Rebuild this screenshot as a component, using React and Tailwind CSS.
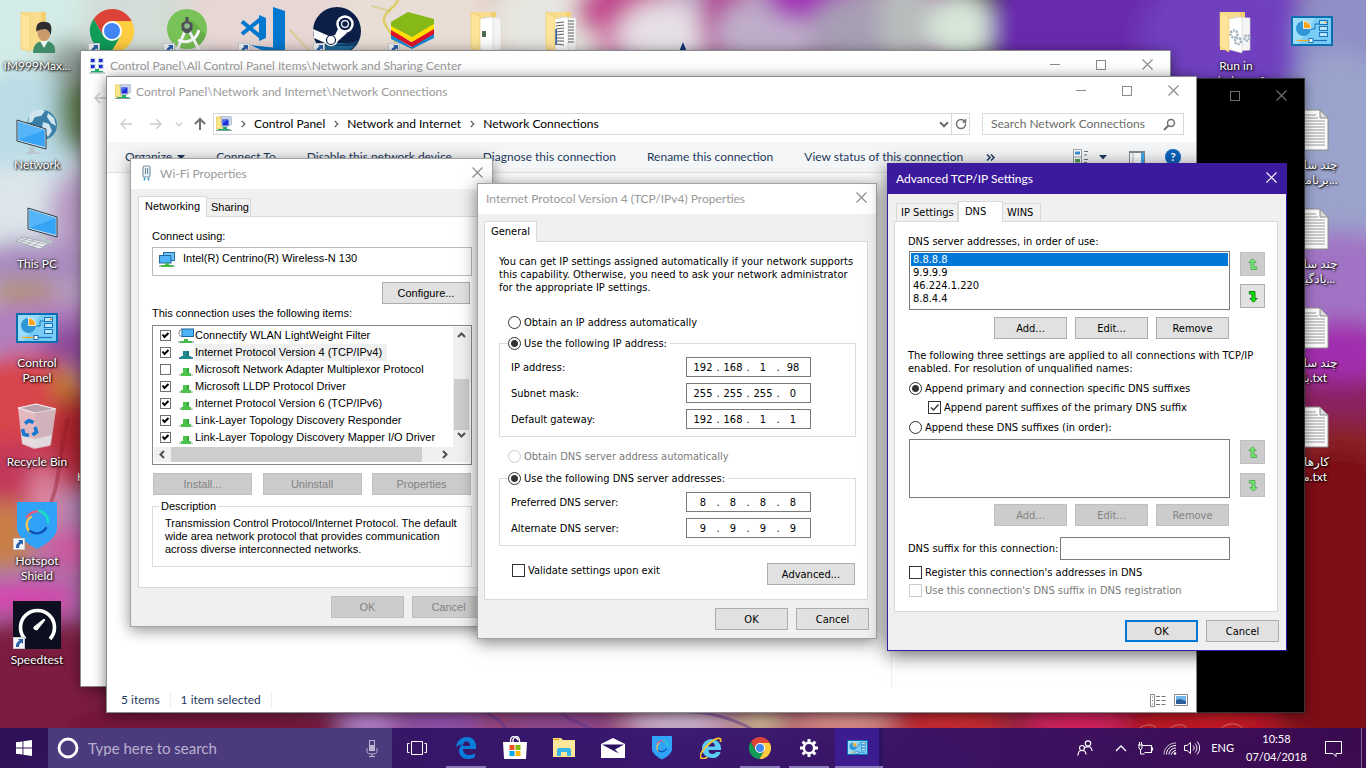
import React from "react";
import { RotateCw } from "lucide-react";

/* ---------- wallpaper ---------- */

const blobs = [
  [20, 20, 110, 70, "#d3ebe6"],
  [20, 130, 60, 60, "#b9dce6"],
  [78, 108, 22, 46, "#5f7a4c"],
  [72, 62, 26, 22, "#8d9a94"],
  [170, 20, 90, 50, "#d3dcd6"],
  [300, 20, 120, 60, "#e6d6d4"],
  [430, 25, 100, 55, "#e9ded6"],
  [500, 10, 14, 50, "#dfb0ae"],
  [550, 20, 60, 55, "#e6e6e0"],
  [625, 10, 50, 34, "#c2488f"],
  [610, 44, 14, 24, "#d386b0"],
  [665, 34, 46, 34, "#e6dfe6"],
  [725, 20, 26, 50, "#b24a98"],
  [765, 34, 50, 36, "#bfaeca"],
  [810, -4, 46, 26, "#a32fb6"],
  [860, 30, 50, 36, "#a79fb4"],
  [1000, 20, 60, 80, "#450b38"],
  [905, 20, 26, 46, "#b8bcbc"],
  [960, 28, 34, 34, "#d6e6d8"],
  [1100, 30, 110, 80, "#6a2cae"],
  [1230, 40, 90, 70, "#7040c0"],
  [1355, 40, 60, 80, "#8f90c6"],
  [1340, 160, 70, 110, "#9aa3cc"],
  [1340, 290, 70, 60, "#a173c4"],
  [1340, 352, 60, 32, "#a12fae"],
  [1340, 405, 60, 24, "#8a2460"],
  [1340, 440, 60, 20, "#8a2028"],
  [1340, 600, 90, 150, "#7d0a12"],
  [20, 210, 60, 45, "#dce6ea"],
  [72, 215, 24, 40, "#b79ac4"],
  [30, 266, 60, 26, "#a98bbf"],
  [24, 292, 34, 10, "#b7983f"],
  [40, 330, 70, 32, "#b07fc0"],
  [70, 352, 30, 30, "#8e4c9c"],
  [24, 410, 70, 56, "#d8454c"],
  [66, 388, 10, 24, "#b2911f"],
  [76, 440, 24, 50, "#a4202c"],
  [20, 475, 50, 34, "#c2395a"],
  [44, 500, 14, 34, "#e08aa5"],
  [4, 535, 30, 34, "#c97f45"],
  [70, 550, 30, 22, "#cc5aa0"],
  [20, 598, 60, 14, "#dc3fae"],
  [40, 690, 130, 70, "#7c1b3f"],
  [210, 730, 150, 30, "#74193a"],
  [370, 722, 30, 14, "#b58ad8"],
  [440, 722, 50, 14, "#8c52b4"],
  [560, 722, 60, 14, "#8a4a94"],
  [680, 722, 60, 14, "#d9cfe6"],
  [760, 722, 30, 14, "#d8cfa0"],
  [845, 722, 60, 14, "#e6a296"],
  [950, 722, 60, 14, "#d62a2a"],
  [1080, 722, 60, 14, "#e22368"],
  [1200, 722, 80, 18, "#c51824"],
];

function Wallpaper() {
  return (
    <svg className="absolute inset-0 h-full w-full" viewBox="0 0 1366 768" preserveAspectRatio="none" aria-hidden="true">
      <defs>
        <filter id="soft" x="-10%" y="-10%" width="120%" height="120%">
          <feGaussianBlur stdDeviation="11" />
        </filter>
        <linearGradient id="base" x1="0" y1="0" x2="1" y2="1">
          <stop offset="0" stopColor="#d5e6e4" />
          <stop offset="0.5" stopColor="#9a5a9a" />
          <stop offset="1" stopColor="#8d0c16" />
        </linearGradient>
      </defs>
      <rect width="1366" height="768" fill="url(#base)" />
      <g filter="url(#soft)">
        {blobs.map(([x, y, rx, ry, c], i) => (
          <ellipse key={i} cx={x} cy={y} rx={rx} ry={ry} fill={c} />
        ))}
      </g>
      <g fill="none" strokeLinecap="round">
        <path d="M398 0c-3 8-12 10-14 18s10 14 14 32" stroke="#d8c83a" strokeWidth="2.500" opacity="0.7" />
        <path d="M290 30l22 24M372 6l18 5" stroke="#d4c060" strokeWidth="2" opacity="0.5" />
        <path d="M68 420c-10 30-6 60-20 90" stroke="#8d1c2b" strokeWidth="4" opacity="0.4" />
        <path d="M480 711c12 4 20 8 26 18M560 711c6 8 16 10 30 17M690 712c20 0 40 6 60 16" stroke="#5d3391" strokeWidth="3" opacity="0.5" />
      </g>
      <g fill="none" stroke="#e9b9c9" strokeWidth="0.900" opacity="0.55">
        <path d="M1130 740c6-14 18-17 24-14s-2 12-10 18-14 16-22 16M1165 735c4-10 16-12 20-9s-6 16-16 20M1218 732c6-10 20-10 24-4" />
      </g>
    </svg>
  );
}

/* ---------- icons ---------- */

function Svg({ size, w, h, box, children, className }) {
  return (
    <svg width={w || size} height={h || size} viewBox={box} className={"block shrink-0 " + (className || "")} aria-hidden="true">
      {children}
    </svg>
  );
}

function FolderBack() {
  return (
    <>
      <path d="M8 5h25v38H8z" fill="#f3cf6f" />
      <path d="M8 5h20v38H8z" fill="#f8dc8c" />
    </>
  );
}
const folderFlap = <path d="M8 5l9 5v35l-9-5z" fill="#fde49a" stroke="#eec966" strokeWidth="0.600" />;

const UserFolder = ({ size = 48 }) => (
  <Svg size={size} box="0 0 48 48">
    <FolderBack />
    {folderFlap}
    <path d="M20 46c0-8 4-12 11-12s12 3 11 12z" fill="#3f8c6b" />
    <path d="M27 34l4 7 4-7z" fill="#f1f5f1" />
    <ellipse cx="31" cy="26" rx="6.500" ry="8" fill="#c89a6c" />
    <path d="M23.500 25c-1.500-9 4-11 9-10 6 0 7 6 5 13-1-4-3-6-6-6-3 1-6 0-8 3z" fill="#2c2c2e" />
  </Svg>
);

function Monitor({ x = 0, y = 0 }) {
  return (
    <g transform={`translate(${x} ${y})`}>
      <path d="M0 0l29 9v20L0 21z" fill="#d9e3ea" stroke="#2a3a48" strokeWidth="1" />
      <path d="M1.200 1.700l26.600 8.300v17L1.200 20z" fill="#35a4f4" />
      <path d="M1.200 1.700l26.600 8.300L1.200 20z" fill="#6cc2fb" opacity="0.6" />
      <path d="M12 26l6 2v4l6 1c1 2-4 4-9 3s-7-3-4-4l2-1z" fill="#bcc6cd" />
    </g>
  );
}

const NetworkIcon = ({ size = 48 }) => (
  <Svg size={size} box="0 0 48 48">
    <circle cx="29" cy="19" r="15" fill="#3a7fa8" />
    <path d="M17 8c6-6 12-5 15-3l-4 5-6 1-3 5-4 1zM35 7l6 5 2 8-5-3-4-6zM30 16l6 2 3 7-4 6-6-8z" fill="#cfe6ee" />
    <Monitor x={4} y={14} />
  </Svg>
);

const PcIcon = ({ size = 48 }) => (
  <Svg size={size} box="0 0 48 48">
    <Monitor x={15} y={3} />
    <path d="M10 32l26 6-9 6L3 36z" fill="#eef1f4" stroke="#98a2ab" strokeWidth="0.800" />
    <path d="M8 33.500l26 6M6 35l24 7M15 33l-8 5M21 35l-8 5M27 37l-8 5" stroke="#98a2ab" strokeWidth="0.800" />
  </Svg>
);

const ControlIcon = ({ w = 42, h = 30 }) => (
  <Svg w={w} h={h} box="0 0 42 30">
    <rect width="42" height="30" fill="#0c6fb0" />
    <rect x="2" y="2" width="38" height="26" fill="#79cdf7" />
    <path d="M2 2h22L8 28H2z" fill="#9adcfa" />
    <circle cx="12.500" cy="12.500" r="7.500" fill="#3196d6" />
    <path d="M12.500 12.500V5a7.500 7.500 0 0 1 7.500 7.500z" fill="#f9a51a" stroke="#fff" strokeWidth="0.800" />
    <path d="M20 13h4V8h5" fill="none" stroke="#1873b8" />
    <g fill="#b9e6fb" stroke="#1873b8">
      <rect x="28.500" y="4.500" width="8" height="4" />
      <rect x="28.500" y="10.500" width="8" height="4" />
      <rect x="28.500" y="16.500" width="8" height="4" />
    </g>
    <path d="M34 6.500h2" stroke="#f37c1a" />
    <path d="M6 24.500h12" stroke="#f9a51a" strokeWidth="1.200" />
    <path d="M20 24.500h16" stroke="#1873b8" strokeWidth="1.200" />
    <rect x="18" y="22.500" width="4" height="4" fill="#fff" stroke="#1873b8" />
  </Svg>
);

const RecycleIcon = ({ size = 48 }) => (
  <Svg size={size} box="0 0 48 48">
    <path d="M5 5l18-4 20 5-6 37-16 3-12-5z" fill="#e8dfe4" opacity="0.75" />
    <path d="M5 5l17 5 21-4-20-5z" fill="#b9a2ac" stroke="#f5f2f4" strokeWidth="1.200" />
    <path d="M22 10l21-4-5 36-16 3z" fill="#cdb2bc" opacity="0.8" />
    <path d="M8 32l14 4 17-4-2 10-15 3-12-4z" fill="#e8ebec" opacity="0.7" />
    <g fill="none" stroke="#1878d0" strokeWidth="3.600">
      <path d="M12 20.500l4-3 4.500 2M22 24l1.500 5-4 3M16 32.500l-5-1-1.500-5.500" />
    </g>
  </Svg>
);

const Shield = ({ size = 48 }) => (
  <Svg size={size} box="0 0 48 48">
    <path d="M4 0h40v26c0 9-12 17-20 21C16 43 4 35 4 26z" fill="#30a2f8" />
    <g fill="none" strokeWidth="2.400" strokeLinecap="round">
      <path d="M14 15c4-6 12-7 16-4" stroke="#e85a78" />
      <path d="M26 9c6 1 9 6 9 11" stroke="#12e3c4" />
      <path d="M17 30c-5-5-4-12 1-15" stroke="#f2c14f" />
      <path d="M33 26c-4 6-11 7-16 3" stroke="#0b55b0" />
    </g>
  </Svg>
);

const Speedtest = ({ size = 48 }) => (
  <Svg size={size} box="0 0 48 48">
    <rect width="48" height="48" fill="#0d0f20" />
    <path d="M12 38a17 17 0 1 1 25 0" fill="none" stroke="#fff" strokeWidth="3.600" />
    <path d="M21 26l10-8 1 1-8 10-3-1z" fill="#fff" stroke="#fff" />
  </Svg>
);

const Chrome = ({ size = 48 }) => (
  <Svg size={size} box="0 0 48 48">
    <path d="M24 14H43.600A22 22 0 0 0 5.550 12L15.340 29z" fill="#db4437" />
    <path d="M5.550 12A22 22 0 0 0 22.850 46L32.660 29H15.340z" fill="#0f9d58" />
    <path d="M22.850 46A22 22 0 0 0 43.600 14H24l8.660 15z" fill="#ffcd40" />
    <circle cx="24" cy="24" r="10" fill="#fff" />
    <circle cx="24" cy="24" r="8" fill="#4285f4" />
  </Svg>
);

const AndroidStudio = ({ size = 48 }) => (
  <Svg size={size} box="0 0 48 48">
    <circle cx="24" cy="22" r="20" fill="#78c257" />
    <path d="M28 12l15 16a20 20 0 0 1-10 12L24 28z" fill="#5da043" opacity="0.6" />
    <path d="M22 24l-9 22M26 24l13 24" stroke="#f0f0f0" strokeWidth="3" />
    <path d="M15 33c8 4 18 1 21-10" fill="none" stroke="#fafafa" strokeWidth="3" />
    <path d="M22.500 10h3v4l4 2.500v6L26 26h-4l-3.500-3.500v-6l4-2.500z" fill="#4d5054" />
    <circle cx="24" cy="19" r="2.800" fill="#8fb98a" />
  </Svg>
);

const VsCode = ({ size = 48 }) => (
  <Svg size={size} box="0 0 48 48">
    <path d="M35 0l12 4v44H35z" fill="#0078d0" />
    <path d="M12 38l23 2.500V48z" fill="#0078d0" />
    <path d="M21 8l7 3v20l-7 3z" fill="#0078d0" />
    <path d="M4 14.500L24 31M4 27L24 11" stroke="#0078d0" strokeWidth="4" />
  </Svg>
);

const Steam = ({ size = 48 }) => (
  <Svg size={size} box="0 0 48 48">
    <circle cx="24" cy="24" r="24" fill="#0c1f48" />
    <path d="M4 36a24 24 0 0 0 40 0z" fill="#1d6c9c" />
    <path d="M2 36c10 4 30 2 44-3l-3 6H6z" fill="#15406e" />
    <path d="M0 22l16 7 6-1 4-8 8 6-9 8c-2 6-9 7-13 2L1 31z" fill="#fff" />
    <circle cx="32" cy="17" r="7.500" fill="#0c1f48" stroke="#fff" strokeWidth="2.500" />
    <circle cx="32" cy="17" r="4" fill="#fff" />
    <circle cx="32" cy="17" r="2.800" fill="#0c1f48" />
    <circle cx="18" cy="33" r="4.500" fill="#fff" stroke="#0c1f48" strokeWidth="1.200" />
  </Svg>
);

const BlueStacks = ({ size = 48 }) => (
  <Svg size={size} box="0 0 48 48">
    <path d="M3 27l20 13 23-14v5L24 42 3 32z" fill="#1289d6" />
    <path d="M3 22l20 13 23-14v6L24 40 3 28z" fill="#e0122c" />
    <path d="M3 18l20 12 23-13v5L24 35 3 23z" fill="#ffe000" />
    <path d="M3 15L20 5l26 7v5L24 30 3 19z" fill="#86b817" />
  </Svg>
);

const DocFolder = ({ size = 48, kind }) => (
  <Svg size={size} box="0 0 48 48">
    <FolderBack />
    <path d="M22 10l16 1v32l-14 1z" fill="#f4f4f4" stroke="#d5d5d5" strokeWidth="0.600" />
    <path d="M15 12l15-2v36l-15-4z" fill="#fff" stroke="#cfcfcf" strokeWidth="0.600" />
    {kind === "pic" && <rect x="19" y="24" width="4" height="6" fill="#4e6a52" />}
    {kind === "text" && (
      <>
        <path d="M18 16l8-1M18 19l8-1M18 22l8-1M18 25l8-1M18 28l8-1M18 31l8 0M18 34l8 0M18 37l8 1M30 14h6M30 17h6M30 20h6M30 23h6M30 26h6M30 29h6M30 32h6M30 35h6" stroke="#4a4a4a" strokeWidth="0.900" />
        <path d="M16 22h3v16h-3z" fill="#3867ae" />
      </>
    )}
    {kind === "gear" && (
      <g fill="none" stroke="#9fb0bd" strokeWidth="2.500" strokeDasharray="2 1">
        <circle cx="22" cy="27" r="3.500" />
        <circle cx="26" cy="34" r="3" />
        <circle cx="35" cy="31" r="2.500" />
      </g>
    )}
    {folderFlap}
  </Svg>
);

const TextFile = ({ size = 48 }) => (
  <Svg size={size} box="0 0 48 48">
    <path d="M4 4h28l8 8v32H4z" fill="#fbfbfb" stroke="#8c8c8c" />
    <path d="M32 4v8h8z" fill="#dcdcdc" stroke="#8c8c8c" />
    <path d="M8 9h20M8 12h22M8 15h29M8 18h29M8 21h29M8 24h29M8 27h29M8 30h29M8 33h29M8 36h29M8 39h29" stroke="#9a9a9a" />
  </Svg>
);

const NavyTip = ({ size = 48 }) => (
  <Svg size={size} box="0 0 48 48">
    <path d="M23 34l-6 14h12z" fill="#12356e" stroke="#dfe3ee" />
  </Svg>
);

const ShortcutBadge = () => (
  <span className="absolute bottom-0 left-0 flex size-3 items-center justify-center border border-[#c8ccd0] bg-[#f4f6f8]">
    <Svg size={10} box="0 0 10 10">
      <path d="M4 1h5v5L7.500 4.500C5.500 5.500 5 7 5 9H2C1.500 6 3 4 5.500 2.500z" fill="#2b62ad" />
    </Svg>
  </span>
);

const FolderNet = () => (
  <Svg size={16} box="0 0 16 16">
    <path d="M0 1h6v12H0z" fill="#fbe58a" stroke="#d9b844" strokeWidth="0.600" />
    <path d="M5 0h10l1 8-5 3H6z" fill="#c9d4e6" stroke="#9aa6ba" strokeWidth="0.600" />
    <path d="M6.500 3.500h6v6h-6z" fill="#1a2fd0" />
    <path d="M6.500 3.500h6l-6 4z" fill="#4c6cf0" />
    <path d="M7 11h4v2h3v1.500H2V13h5z" fill="#1fae6a" />
    <path d="M0 14.500h16" stroke="#8aa0a0" />
  </Svg>
);

const QuadNet = () => (
  <Svg size={16} box="0 0 16 16">
    <g fill="#1d2bd2" stroke="#c0cde4" strokeWidth="1">
      <rect x="1.500" y="0.500" width="4.500" height="4" />
      <rect x="9.500" y="0.500" width="4.500" height="4" />
      <rect x="1.500" y="6.500" width="4.500" height="4" />
      <rect x="9.500" y="6.500" width="4.500" height="4" />
    </g>
    <path d="M6 11h4v2h4v1.500H2V13h4z" fill="#1fae6a" />
    <path d="M0 15h16" stroke="#a0b0b0" />
  </Svg>
);

const AntennaIcon = () => (
  <Svg w={12} h={18} box="0 0 12 18">
    <rect x="2" y="1" width="7" height="11" rx="1.500" fill="#e9f0f5" stroke="#7b97aa" strokeWidth="1.200" />
    <path d="M4.500 3v6M6.500 3v6" stroke="#6b8aa0" />
    <path d="M3.500 12.500v3M7.500 12.500v3" stroke="#3c9bd0" strokeWidth="1.600" />
  </Svg>
);

const DualMonitor = ({ gear }) => (
  <Svg size={16} box="0 0 16 16">
    {gear ? (
      <path d="M4 1l-2 1-1 3 1 3 3 1" fill="none" stroke="#8d979e" strokeWidth="1.600" strokeDasharray="1.600 0.800" />
    ) : (
      <rect x="4.500" y="0.500" width="11" height="8" fill="#6fc6fa" stroke="#2268a0" />
    )}
    <rect x={gear ? 4 : 0.5} y={gear ? 1 : 3.5} width="11.500" height="7.500" fill="#4fb4f7" stroke="#2268a0" />
    <path d="M6 11h4v2h4v2H2v-2h4z" fill="#46bb49" />
    <path d="M0 14h2M14 14h2" stroke="#b9c0c4" strokeWidth="2" />
  </Svg>
);

const ProtoIcon = ({ selected }) => (
  <Svg w={14} h={8} box="0 0 14 8" className="mt-1">
    <path d="M0 7h14" stroke={selected ? "#4a86b8" : "#cfd2d4"} strokeWidth="2" />
    <path d="M4 0h6v5h2v3H2V5h2z" fill={selected ? "#1f8a8c" : "#4cc34c"} />
    <path d="M8 0h2v5H8z" fill={selected ? "#17787e" : "#36ab3a"} />
  </Svg>
);

const chevronPaths = { up: "M1 6l3.500-3.500L8 6", down: "M1 3l3.500 3.500L8 3", left: "M6 1L2.500 4.500 6 8", right: "M3 1l3.500 3.500L3 8" };

const Chevron = ({ dir, size = 9, color = "#505050", width = 2 }) => (
  <Svg size={size} box="0 0 9 9">
    <path d={chevronPaths[dir]} fill="none" stroke={color} strokeWidth={width} />
  </Svg>
);

const arrowPaths = { left: "M13 7H2M7 2L2 7l5 5", right: "M1 7h11M7 2l5 5-5 5", up: "M7 13V2M2 7l5-5 5 5" };

const NavArrow = ({ dir, color }) => (
  <Svg size={14} box="0 0 14 14">
    <path d={arrowPaths[dir]} fill="none" stroke={color} strokeWidth={dir === "up" ? 2 : 1.3} />
  </Svg>
);

/* ---------- desktop shortcuts ---------- */

function Shortcut({ icon, lines = [], badge }) {
  return (
    <button type="button" className="flex h-[99px] w-[74px] flex-col items-center pt-[7px]">
      <span className="relative flex size-12 shrink-0 items-center justify-center">
        {icon}
        {badge && <ShortcutBadge />}
      </span>
      <span className="mt-[3px] text-center leading-[15px] whitespace-nowrap text-white [text-shadow:1px_1px_2px_#000,0_0_3px_#000]">
        {lines.map((l, i) => (
          <span key={i} className="block" dir="ltr">
            {l}
          </span>
        ))}
      </span>
    </button>
  );
}

/* ---------- window parts ---------- */

const captionBtn = "flex h-[27px] w-[46px] items-center justify-center";

function CloseButton({ color = "#8a8a8a", narrow }) {
  return (
    <button type="button" aria-label="Close" className={narrow ? "flex h-[27px] w-[30px] items-center justify-center" : captionBtn}>
      <Svg size={11} box="0 0 11 11">
        <path d="M.5.5l10 10M10.500.5l-10 10" stroke={color} strokeWidth="1.100" />
      </Svg>
    </button>
  );
}

function Caption({ color = "#8a8a8a", noMin }) {
  return (
    <div className="ml-auto flex self-start">
      {!noMin && (
        <button type="button" aria-label="Minimize" className={captionBtn}>
          <span className="h-px w-[10px] bg-[#8a8a8a]" />
        </button>
      )}
      <button type="button" aria-label="Maximize" className={captionBtn}>
        <Svg size={10} box="0 0 10 10">
          <rect x=".5" y=".5" width="9" height="9" fill="none" stroke={color} />
        </Svg>
      </button>
      <CloseButton color={color} />
    </div>
  );
}

function DialogTitle({ icon, title, active }) {
  return (
    <header className={"flex h-[30px] items-center pb-px pl-2 " + (active ? "bg-[#3c1a9d] text-white" : "bg-white text-[#999]")}>
      {icon}
      <h2>{title}</h2>
      <span className="ml-auto self-start">
        <CloseButton narrow color={active ? "#fff" : "#8a8a8a"} />
      </span>
    </header>
  );
}

function Tabs({ items, selected }) {
  return (
    <div role="tablist" className="flex items-end">
      {items.map(([name, w]) =>
        name === selected ? (
          <button key={name} type="button" role="tab" aria-selected="true" className={"relative -mb-px h-[21px] border border-b-0 border-[#d9d9d9] bg-white pb-px pl-[6px] text-left " + w}>
            {name}
          </button>
        ) : (
          <button key={name} type="button" role="tab" aria-selected="false" className={"h-[18px] border border-b-0 border-l-0 border-[#d9d9d9] bg-[#f0f0f0] pl-1 text-left first:border-l " + w}>
            {name}
          </button>
        )
      )}
    </div>
  );
}

function Btn({ children, wide, disabled, primary }) {
  return (
    <button
      type="button"
      disabled={disabled}
      className={
        "h-[22px] " +
        (wide || "w-[73px]") +
        (disabled ? " border border-[#bfbfbf] bg-[#ccc] text-[#838383]" : primary ? " border-2 border-[#0078d7] bg-[#e1e1e1]" : " border border-[#adadad] bg-[#e1e1e1]")
      }
    >
      {children}
    </button>
  );
}

function Radio({ id, name, label, checked, disabled }) {
  return (
    <span className={"flex h-[14px] items-center gap-[3px] " + (disabled ? "text-[#7a7a7a]" : "")}>
      <input
        id={id}
        type="radio"
        name={name}
        defaultChecked={checked}
        disabled={disabled}
        className="size-[13px] shrink-0 appearance-none rounded-full border border-[#333] bg-white checked:bg-[radial-gradient(circle,#333_0_3px,#fff_4px)] disabled:border-[#ccc]"
      />
      <label htmlFor={id}>{label}</label>
    </span>
  );
}

function Check({ id, label, checked, disabled }) {
  return (
    <span className={"flex h-[14px] items-center gap-[3px] " + (disabled ? "text-[#7a7a7a]" : "")}>
      <span className="grid">
        <input
          id={id}
          type="checkbox"
          defaultChecked={checked}
          disabled={disabled}
          className="peer col-start-1 row-start-1 size-[13px] appearance-none border border-[#333] bg-white disabled:border-[#ccc]"
        />
        <svg viewBox="0 0 13 13" className="pointer-events-none col-start-1 row-start-1 hidden size-[13px] peer-checked:block" aria-hidden="true">
          <path d="M3 6.500l2.500 2.500L10.500 3.500" fill="none" stroke="#333" strokeWidth="1.400" />
        </svg>
      </span>
      <label htmlFor={id}>{label}</label>
    </span>
  );
}

const tahoma = "font-['DejaVu_Sans_Condensed','DejaVu_Sans',sans-serif] text-[11px] leading-[13px] text-black";
const shell = "font-['Liberation_Sans',Arial,sans-serif] text-[11px] leading-[13px] text-black";

/* ---------- explorer windows ---------- */

function SharingCenter() {
  return (
    <section className="absolute top-[51px] left-[81px] h-[635px] w-[1089px] bg-white shadow-[0_2px_14px_rgba(0,0,0,0.5)] outline outline-[#8b8b8b]">
      <header className="flex h-[30px] items-center pb-px pl-2 text-[#999]">
        <QuadNet />
        <h2 className="ml-[5px]">Control Panel\All Control Panel Items\Network and Sharing Center</h2>
        <Caption />
      </header>
      <div className="px-3 pt-[10px]">
        <NavArrow dir="left" color="#c8c8c8" />
      </div>
    </section>
  );
}

const commands = ["Connect To", "Disable this network device", "Diagnose this connection", "Rename this connection", "View status of this connection"];

function NetworkConnections() {
  return (
    <section className="absolute top-[77px] left-[107px] flex h-[635px] w-[1089px] flex-col bg-white shadow-[0_2px_14px_rgba(0,0,0,0.6)] outline outline-[#8b8b8b]">
      <header className="flex h-[30px] items-center pb-px pl-2 text-[#999]">
        <FolderNet />
        <h2 className="ml-[5px]">Control Panel\Network and Internet\Network Connections</h2>
        <Caption />
      </header>

      <div className="flex h-[35px] items-center pr-3 pb-px pl-3">
        <button type="button" aria-label="Back">
          <NavArrow dir="left" color="#ccc" />
        </button>
        <button type="button" aria-label="Forward" className="ml-4">
          <NavArrow dir="right" color="#ccc" />
        </button>
        <button type="button" aria-label="Recent" className="ml-3">
          <Chevron dir="down" size={8} color="#ccc" width={1.5} />
        </button>
        <button type="button" aria-label="Up" className="ml-[10px]">
          <NavArrow dir="up" color="#707070" />
        </button>
        <nav className="ml-[6px] flex h-[22px] flex-1 items-center border border-[#d9d9d9] pl-[2px] text-black">
          <FolderNet />
          {["Control Panel", "Network and Internet", "Network Connections"].map((c) => (
            <React.Fragment key={c}>
              <span className="flex w-[22px] justify-center">
                <Chevron dir="right" size={8} color="#606060" width={1.5} />
              </span>
              <a href="#">{c}</a>
            </React.Fragment>
          ))}
          <button type="button" aria-label="Previous locations" className="mr-[2px] ml-auto">
            <Chevron dir="down" size={10} color="#707070" />
          </button>
          <button type="button" aria-label="Refresh" className="flex h-full w-[18px] items-center justify-center border-l border-[#d9d9d9]">
            <RotateCw size={12} strokeWidth={3} color="#707070" />
          </button>
        </nav>
        <div className="ml-3 flex h-[22px] w-[202px] items-center border border-[#d9d9d9] pr-[7px] pl-2">
          <input type="search" aria-label="Search Network Connections" placeholder="Search Network Connections" className="min-w-0 flex-1 outline-none placeholder:text-[#6d6d6d]" />
          <Svg size={13} box="0 0 13 13">
            <circle cx="8" cy="5" r="3.500" fill="none" stroke="#707070" strokeWidth="1.500" />
            <path d="M5.500 7.500L1 12" stroke="#707070" strokeWidth="2" />
          </Svg>
        </div>
      </div>

      <div className="flex h-[31px] items-center gap-[31px] border-b border-[#e4e4e6] bg-gradient-to-b from-[#f3f5f7] to-[#f6f7f8] pr-[15px] pl-[18px] text-[#1e395b]">
        <button type="button" className="flex items-center gap-[5px]">
          Organize
          <Svg w={8} h={5} box="0 0 8 5">
            <path d="M0 0h8L4 4.500z" fill="#1e395b" />
          </Svg>
        </button>
        {commands.map((c) => (
          <button key={c} type="button">
            {c}
          </button>
        ))}
        <button type="button" aria-label="More commands" className="-ml-2">
          <Svg w={9} h={7} box="0 0 9 7">
            <path d="M1 .5l3 3-3 3M5 .5l3 3-3 3" fill="none" stroke="#1e395b" strokeWidth="1.500" />
          </Svg>
        </button>
        <div className="ml-auto flex items-center">
          <button type="button" aria-label="Change your view" className="flex items-center gap-[10px]">
            <Svg w={16} h={16} box="0 0 16 16">
              <path d="M.5.5h8v15h-8zM.5 8h8" fill="#fff" stroke="#9aa0a6" />
              <path d="M2 2.500h5v3H2z" fill="#3b8ed8" />
              <path d="M2 10h5v3.500H2z" fill="#4e9a4e" />
              <path d="M11 2.500h4M11 6h3M11 10.500h4M11 13.500h3" stroke="#6a7480" />
            </Svg>
            <Svg w={8} h={5} box="0 0 8 5">
              <path d="M0 0h8L4 4.500z" fill="#1e395b" />
            </Svg>
          </button>
          <button type="button" aria-label="Preview pane" className="ml-[22px]">
            <Svg w={16} h={13} box="0 0 16 13">
              <path d="M.5.5h15v12H.5z" fill="#fff" stroke="#808890" />
              <path d="M0 1h16" stroke="#808890" strokeWidth="2" />
              <path d="M4 2v10" stroke="#b0b6bc" />
              <path d="M12 2h3v10h-3z" fill="#3da9ee" />
            </Svg>
          </button>
          <button type="button" aria-label="Help" className="ml-5 flex size-4 items-center justify-center rounded-full bg-[#0a63bd] text-[12px] font-bold text-white">
            ?
          </button>
        </div>
      </div>

      <div className="flex flex-1 justify-end">
        <aside className="w-[305px] border-l border-[#f0f0f0]" />
      </div>

      <footer className="flex h-[24px] items-center pr-2 pl-[14px] text-[#1e395b]">
        <span className="border-r border-[#eee] pr-[10px]">5 items</span>
        <span className="border-r border-[#eee] px-[10px]">1 item selected</span>
        <span className="ml-auto flex gap-2">
          <button type="button" aria-label="Details">
            <Svg w={16} h={13} box="0 0 16 13">
              <path d="M.5.5h4v12h-4z" fill="#fff" stroke="#8a8a8a" />
              <path d="M2 3h1M2 6.500h1M2 10h1M6 2.500h4M11.500 2.500h4M6 6.500h4M11.500 6.500h4M6 10.500h4M11.500 10.500h4" stroke="#777" />
            </Svg>
          </button>
          <button type="button" aria-label="Large icons">
            <Svg w={14} h={12} box="0 0 14 12">
              <path d="M.5.5h13v11H.5z" fill="#fff" stroke="#8a8a8a" />
              <path d="M2 2h10v5H2z" fill="#6fb5ee" />
              <path d="M2 6l4-1 6 2v3H2z" fill="#2c5f9a" />
            </Svg>
          </button>
        </span>
      </footer>
    </section>
  );
}

/* ---------- dialogs ---------- */

const items = [
  ["Connectify WLAN LightWeight Filter", true],
  ["Internet Protocol Version 4 (TCP/IPv4)", true],
  ["Microsoft Network Adapter Multiplexor Protocol", false],
  ["Microsoft LLDP Protocol Driver", true],
  ["Internet Protocol Version 6 (TCP/IPv6)", true],
  ["Link-Layer Topology Discovery Responder", true],
  ["Link-Layer Topology Discovery Mapper I/O Driver", true],
];

function WifiProperties() {
  return (
    <section className="absolute top-[158px] left-[130px] w-[363px] border border-[#a3a3a3] bg-[#f0f0f0] pb-2 shadow-[0_3px_14px_rgba(0,0,0,0.45)]">
      <DialogTitle
        title="Wi-Fi Properties"
        icon={
          <span className="mr-[7px] ml-[2px]">
            <AntennaIcon />
          </span>
        }
      />
      <div className={"px-[7px] pt-[7px] " + shell}>
        <Tabs
          items={[
            ["Networking", "w-[69px]"],
            ["Sharing", "w-[44px]"],
          ]}
          selected="Networking"
        />
        <div className="h-[372px] border border-[#d9d9d9] bg-white pr-3 pl-[13px]">
          <p className="pt-[13px]">Connect using:</p>
          <div className="mt-1 flex h-[29px] gap-2 border border-[#bababa] px-[6px] pt-1">
            <DualMonitor />
            <span>Intel(R) Centrino(R) Wireless-N 130</span>
          </div>
          <div className="mt-[6px] flex justify-end pr-[2px]">
            <Btn wide="w-[88px]">Configure...</Btn>
          </div>
          <p className="mt-[3px]">This connection uses the following items:</p>
          <div className="mt-[5px] flex h-[140px] flex-col border border-[#828790] p-px">
            <div className="flex flex-1">
              <ul className="flex-1">
                {items.map(([name, on], i) => (
                  <li key={name} className="flex h-[17px] items-center pl-[6px]">
                    <span className="grid">
                      <input id={"item" + i} type="checkbox" defaultChecked={on} className="peer col-start-1 row-start-1 size-[11px] appearance-none border border-[#707070] bg-white" />
                      <svg viewBox="0 0 11 11" className="pointer-events-none col-start-1 row-start-1 hidden size-[11px] peer-checked:block" aria-hidden="true">
                        <path d="M2.500 4.500l2 2.500L8.500 3" fill="none" stroke="#000" strokeWidth="2" />
                      </svg>
                    </span>
                    <span className="ml-[6px] flex w-[17px] justify-center">{i === 0 ? <DualMonitor gear /> : <ProtoIcon selected={i === 1} />}</span>
                    <label htmlFor={"item" + i} className={"h-[17px] pr-[5px] pl-px leading-[17px] " + (i === 1 ? "bg-[#f0f0f0]" : "")}>
                      {name}
                    </label>
                  </li>
                ))}
              </ul>
              <div className="flex w-[17px] flex-col items-center bg-[#f0f0f0] pt-1 pb-2">
                <button type="button" aria-label="Scroll up">
                  <Chevron dir="up" />
                </button>
                <span className="mt-[39px] h-[51px] w-[15px] bg-[#cdcdcd]" />
                <button type="button" aria-label="Scroll down" className="mt-auto">
                  <Chevron dir="down" />
                </button>
              </div>
            </div>
            <div className="mb-px flex h-[15px] items-center bg-[#f0f0f0]">
              <button type="button" aria-label="Scroll left" className="flex w-[17px] justify-center">
                <Chevron dir="left" />
              </button>
              <span className="h-[15px] w-[251px] bg-[#cdcdcd]" />
              <button type="button" aria-label="Scroll right" className="ml-[18px]">
                <Chevron dir="right" />
              </button>
            </div>
          </div>
          <div className="mt-2 flex justify-between px-px">
            <Btn disabled wide="w-[99px]">Install...</Btn>
            <Btn disabled wide="w-[99px]">Uninstall</Btn>
            <Btn disabled wide="w-[99px]">Properties</Btn>
          </div>
          <fieldset className="mt-[5px] h-[67px] border border-[#dcdcdc] pl-3">
            <legend className="-ml-[6px] px-[2px]">Description</legend>
            <p className="pt-1">
              Transmission Control Protocol/Internet Protocol. The default
              <br />
              wide area network protocol that provides communication
              <br />
              across diverse interconnected networks.
            </p>
          </fieldset>
        </div>
        <div className="mt-2 flex justify-end gap-2">
          <Btn disabled>OK</Btn>
          <Btn disabled>Cancel</Btn>
        </div>
      </div>
    </section>
  );
}

function IpField({ label, octets }) {
  return (
    <div className="flex h-[20px] items-center" role="group" aria-label={label}>
      <span className="w-[175px]">{label}</span>
      <div className="flex h-[20px] w-[125px] items-center border border-[#7a7a7a] bg-white pl-1">
        {octets.map((o, i) => (
          <React.Fragment key={i}>
            {i > 0 && <span className="w-[6px] text-center">.</span>}
            <input type="text" aria-label={`${label} part ${i + 1}`} defaultValue={o} className="w-6 text-center outline-none" />
          </React.Fragment>
        ))}
      </div>
    </div>
  );
}

function Ipv4Properties() {
  return (
    <section className="absolute top-[183px] left-[477px] w-[400px] border border-[#a3a3a3] bg-[#f0f0f0] pb-2 shadow-[0_3px_16px_rgba(0,0,0,0.5)]">
      <DialogTitle title="Internet Protocol Version 4 (TCP/IPv4) Properties" />
      <div className={"pt-[7px] pr-[7px] pl-[6px] " + tahoma}>
        <Tabs items={[["General", "w-[53px]"]]} selected="General" />
        <div className="mr-px h-[359px] border border-[#d9d9d9] bg-white pr-[11px] pl-[14px]">
          <p className="pt-[13px]">
            You can get IP settings assigned automatically if your network supports
            <br />
            this capability. Otherwise, you need to ask your network administrator
            <br />
            for the appropriate IP settings.
          </p>
          <div className="mt-[21px] pl-[9px]">
            <Radio id="ip-auto" name="ip" label="Obtain an IP address automatically" />
          </div>
          <fieldset className="mt-[7px] h-[101px] border border-[#dcdcdc] pl-[11px]">
            <legend className="-ml-[3px] pr-[3px]">
              <Radio id="ip-manual" name="ip" label="Use the following IP address:" checked />
            </legend>
            <div className="mt-[7px] flex flex-col gap-[6px]">
              <IpField label="IP address:" octets={["192", "168", "1", "98"]} />
              <IpField label="Subnet mask:" octets={["255", "255", "255", "0"]} />
              <IpField label="Default gateway:" octets={["192", "168", "1", "1"]} />
            </div>
          </fieldset>
          <div className="mt-3 pl-[9px]">
            <Radio id="dns-auto" name="dns" label="Obtain DNS server address automatically" disabled />
          </div>
          <fieldset className="mt-[8px] h-[75px] border border-[#dcdcdc] pl-[11px]">
            <legend className="-ml-[3px] pr-[3px]">
              <Radio id="dns-manual" name="dns" label="Use the following DNS server addresses:" checked />
            </legend>
            <div className="mt-[7px] flex flex-col gap-[6px]">
              <IpField label="Preferred DNS server:" octets={["8", "8", "8", "8"]} />
              <IpField label="Alternate DNS server:" octets={["9", "9", "9", "9"]} />
            </div>
          </fieldset>
          <div className="mt-[17px] flex items-start justify-between pr-px pl-[13px]">
            <Check id="validate" label="Validate settings upon exit" />
            <Btn wide="w-[88px]">Advanced...</Btn>
          </div>
        </div>
        <div className="mt-2 flex justify-end gap-2">
          <Btn>OK</Btn>
          <Btn>Cancel</Btn>
        </div>
      </div>
    </section>
  );
}

function MoveButton({ dir, disabled }) {
  return (
    <button
      type="button"
      aria-label={dir === "up" ? "Move up" : "Move down"}
      disabled={disabled}
      className={"flex h-6 w-[25px] items-center justify-center border " + (disabled ? "border-[#bfbfbf] bg-[#ccc]" : "border-[#adadad] bg-[#e1e1e1]")}
    >
      <Svg w={10} h={13} box="0 0 10 13">
        <path
          d={dir === "up" ? "M4.500.8L.8 4.500h2.200v7h5.700V9H6V4.500h2.200z" : "M5.500 12.200L9.200 8.500H7V1.500H1.300V4H4v4.500H1.800z"}
          fill={disabled ? "#6fe86f" : "#08ee08"}
          stroke={disabled ? "#58a458" : "#0a6e0a"}
          strokeWidth="0.900"
        />
      </Svg>
    </button>
  );
}

function AdvancedSettings() {
  return (
    <section className="absolute top-[163px] left-[887px] w-[400px] border border-[#3c1a9d] bg-[#f0f0f0] pb-2 shadow-[0_4px_18px_rgba(0,0,0,0.6)]">
      <DialogTitle active title="Advanced TCP/IP Settings" />
      <div className={"pt-[7px] pr-[7px] pl-[6px] " + tahoma}>
        <div className="pl-[2px]">
          <Tabs
            items={[
              ["IP Settings", "w-[62px]"],
              ["DNS", "w-[45px]"],
              ["WINS", "w-[38px]"],
            ]}
            selected="DNS"
          />
        </div>
        <div className="mr-px h-[391px] border border-[#d9d9d9] bg-white pr-3 pl-[13px]">
          <p className="pt-[13px]">DNS server addresses, in order of use:</p>
          <div className="mt-[3px] flex gap-[10px] pl-px">
            <ul role="listbox" aria-label="DNS server addresses" className="h-[59px] w-[321px] border border-[#7a7a80] p-px">
              {["8.8.8.8", "9.9.9.9", "46.224.1.220", "8.8.4.4"].map((d, i) => (
                <li key={d} role="option" aria-selected={i === 0} className={"pl-[2px] " + (i === 0 ? "bg-[#0078d7] text-white" : "")}>
                  {d}
                </li>
              ))}
            </ul>
            <div className="flex flex-col gap-2 pt-px">
              <MoveButton dir="up" disabled />
              <MoveButton dir="down" />
            </div>
          </div>
          <div className="mt-[7px] flex justify-end gap-2 pr-9">
            <Btn>Add...</Btn>
            <Btn>Edit...</Btn>
            <Btn>Remove</Btn>
          </div>
          <p className="mt-[10px]">
            The following three settings are applied to all connections with TCP/IP
            <br />
            enabled. For resolution of unqualified names:
          </p>
          <div className="mt-[6px] flex flex-col pl-px">
            <Radio id="sfx-primary" name="sfx" label="Append primary and connection specific DNS suffixes" checked />
            <div className="mt-[5px] pl-[19px]">
              <Check id="sfx-parent" label="Append parent suffixes of the primary DNS suffix" checked />
            </div>
            <div className="mt-[6px]">
              <Radio id="sfx-these" name="sfx" label="Append these DNS suffixes (in order):" />
            </div>
          </div>
          <div className="mt-[5px] flex gap-[10px] pl-px">
            <ul role="listbox" aria-label="DNS suffixes" className="h-[59px] w-[321px] border border-[#7a7a80]" />
            <div className="flex flex-col gap-[9px] pt-px">
              <MoveButton dir="up" disabled />
              <MoveButton dir="down" disabled />
            </div>
          </div>
          <div className="mt-[6px] flex justify-end gap-2 pr-9">
            <Btn disabled>Add...</Btn>
            <Btn disabled>Edit...</Btn>
            <Btn disabled>Remove</Btn>
          </div>
          <div className="mt-[11px] flex items-center justify-between pr-[35px]">
            <label htmlFor="suffix" className="whitespace-nowrap">
              DNS suffix for this connection:
            </label>
            <input id="suffix" type="text" className="h-[23px] w-[170px] border border-[#7a7a7a] bg-white px-1" />
          </div>
          <div className="mt-[5px] flex flex-col gap-1 pl-px">
            <Check id="reg" label="Register this connection's addresses in DNS" />
            <Check id="reg-sfx" label="Use this connection's DNS suffix in DNS registration" disabled />
          </div>
        </div>
        <div className="mt-2 flex justify-end gap-2">
          <Btn primary>OK</Btn>
          <Btn>Cancel</Btn>
        </div>
      </div>
    </section>
  );
}

/* ---------- taskbar ---------- */

const EdgeIcon = () => (
  <Svg size={22} box="0 0 22 22">
    <path d="M1 10C2 3 7 0 12 0c6 0 9 5 9 9v3H8c0 4 3 6 6 6 2 0 4-.5 6-1.500V20c-2 1.500-5 2-7 2-6 0-9-4-9-8 0-3 2-6 4-7-2 .5-5 1-7 3zm7-1h7c0-3-1-4.500-3.500-4.500S8 6.500 8 9z" fill="#0a7cdb" />
  </Svg>
);
const StoreIcon = () => (
  <Svg w={24} h={24} box="0 0 24 24">
    <path d="M7.500 7V4.500a4 4 0 0 1 9 0V7M10 6V3.500c1-3 5-2 5 1" fill="none" stroke="#fff" strokeWidth="1.300" />
    <path d="M0 6h24l-1 16.500a1 1 0 0 1-1 .5H2a1 1 0 0 1-1-.5z" fill="#fff" />
    <path d="M6.500 9h5v5h-5z" fill="#f25022" />
    <path d="M12.500 9h5v5h-5z" fill="#7fba00" />
    <path d="M6.500 15h5v5h-5z" fill="#00a4ef" />
    <path d="M12.500 15h5v5h-5z" fill="#ffb900" />
  </Svg>
);
const ExplorerIcon = () => (
  <Svg w={22} h={19} box="0 0 22 19">
    <path d="M0 0h8l2 2h12v17H0z" fill="#fbe08a" />
    <path d="M1 1h5v1H1z" fill="#f39a1e" />
    <path d="M0 3h22v15H0z" fill="#fde79b" />
    <path d="M4 18v-6a2 2 0 0 1 2-2h10a2 2 0 0 1 2 2v6h-4v-4H8v4z" fill="#3bb4e8" />
  </Svg>
);
const MailIcon = () => (
  <Svg w={24} h={20} box="0 0 24 20">
    <path d="M0 6l12-6 12 6v14H0z" fill="#fff" />
    <path d="M1 6.500h22l-9 5 4 4-5-2.500z" fill="#2b1260" />
  </Svg>
);
const IeIcon = () => (
  <Svg size={22} box="0 0 22 22">
    <path d="M2 11.500a9.500 9.500 0 0 1 19 0V13H8.500c0 3 2 4 4 4s3-1 3.500-2h4.500c-1 4-4 6-8 6C6.500 21 2 17 2 11.500zM8.500 9.500h6.500c0-2-1-4-3.300-4S8.500 7.500 8.500 9.500z" fill="#5cccf8" />
    <path d="M20.500 5c1.500-6-5-4-10.500 1S-1.500 18 1 21c1.500 1.500 4 .5 6.500-1" fill="none" stroke="#f4c430" strokeWidth="1.800" />
  </Svg>
);
const GearIcon = () => (
  <Svg size={20} box="0 0 20 20">
    <circle cx="10" cy="10" r="5.200" fill="none" stroke="#fff" strokeWidth="2.600" />
    <g stroke="#fff" strokeWidth="3">
      <path d="M10 1v3M10 16v3M1 10h3M16 10h3M3.600 3.600l2.200 2.200M14.200 14.200l2.200 2.200M16.400 3.600l-2.200 2.200M5.800 14.200l-2.200 2.200" />
    </g>
  </Svg>
);

const apps = [
  ["Edge", <EdgeIcon />, true],
  ["Store", <StoreIcon />, false],
  ["File Explorer", <ExplorerIcon />, false],
  ["Mail", <MailIcon />, false],
  ["Hotspot Shield", <Shield size={24} />, false],
  ["Internet Explorer", <IeIcon />, false],
  ["Chrome", <Chrome size={24} />, true],
  ["Settings", <GearIcon />, true],
];

function Taskbar() {
  return (
    <footer className="relative mt-auto flex h-10 bg-gradient-to-r from-[#2a1057]/95 via-[#341670]/95 to-[#370a52]/95 text-white">
      <button type="button" aria-label="Start" className="flex w-12 items-center justify-center">
        <Svg size={16} box="0 0 16 16">
          <path d="M0 2.300L6.500 1.400v6.200H0zM7.400 1.300L16 0v7.600H7.400zM0 8.400h6.500v6.200L0 13.700zM7.400 8.400H16V16l-8.600-1.300z" fill="#fff" />
        </Svg>
      </button>
      <div className="flex w-[344px] items-center bg-[#4b3a7c] pr-[14px] pl-[9px]">
        <Svg size={22} box="0 0 22 22">
          <circle cx="11" cy="11" r="9" fill="none" stroke="#fff" strokeWidth="2.800" />
        </Svg>
        <input type="search" aria-label="Type here to search" placeholder="Type here to search" className="ml-[9px] min-w-0 flex-1 text-[15px] outline-none placeholder:text-[#b9b0cf]" />
        <Svg w={12} h={17} box="0 0 12 17">
          <rect x="3.500" y=".5" width="5" height="10" fill="none" stroke="#bdb4d2" />
          <path d="M4 5h4v5H4z" fill="#bdb4d2" />
          <path d="M1 8v3.500c0 2 2 2.500 5 2.500s5-.5 5-2.500V8M6 14v3M3 16.500h6" fill="none" stroke="#bdb4d2" />
        </Svg>
      </div>
      <button type="button" aria-label="Task View" className="flex w-[49px] items-center justify-center">
        <Svg w={20} h={14} box="0 0 20 14">
          <path d="M4.500.5h11v13h-11zM2.500 2.500h-2v9h2M17.500 2.500h2v9h-2" fill="none" stroke="#fff" />
        </Svg>
      </button>
      {apps.map(([name, icon, open]) => (
        <button key={name} type="button" aria-label={name} className="flex w-[49px] flex-col items-center pt-px">
          <span className="flex flex-1 items-center">{icon}</span>
          <span className={"h-[2px] w-10 " + (open ? "bg-[#8a79b8]" : "")} />
        </button>
      ))}
      <button type="button" aria-label="Control Panel" className="ml-[2px] flex w-[44px] items-center justify-center border-b-2 border-[#8a79b8] bg-[#3d1c92]">
        <ControlIcon w={21} h={15} />
      </button>
      <span className="w-[4px] border-b-2 border-[#8a79b8] bg-[#2b1263]" />
      <div className="ml-auto flex items-center">
        <button type="button" aria-label="People">
          <Svg size={16} box="0 0 16 16">
            <g fill="none" stroke="#fff" strokeWidth="1.200">
              <circle cx="11" cy="3.500" r="2.700" />
              <circle cx="5" cy="8" r="2.500" />
              <path d="M1 15.500c0-3 1.500-5 4-5s4 1.500 4 4M8 7.500c4-2 7-.5 7 3.500" />
            </g>
          </Svg>
        </button>
        <button type="button" aria-label="Show hidden icons" className="ml-[22px]">
          <Svg w={12} h={8} box="0 0 12 8">
            <path d="M1 7l5-5 5 5" fill="none" stroke="#fff" strokeWidth="1.300" />
          </Svg>
        </button>
        <Svg w={17} h={13} box="0 0 17 13" className="ml-[10px]">
          <path d="M5.500 3.500h9v7h-7M15.500 5.500v3" fill="none" stroke="#fff" strokeWidth="1.200" />
          <path d="M1 3h5M2 3v3l1.500 2L5 6V3M2.500 0v3M4.500 0v3M3.500 8v4h4" fill="none" stroke="#fff" />
        </Svg>
        <Svg w={14} h={13} box="0 0 14 13" className="ml-[9px]">
          <g fill="none" stroke="#fff">
            <path d="M1 12.500C1 6 6 1 13 1" opacity="0.7" />
            <path d="M3.500 12.500c0-5 4-9 9.500-9M6 12.500c0-3.500 3-6.500 7-6.500M8.500 12.500c0-2 2-4 4.500-4" />
          </g>
          <circle cx="12" cy="11.500" r="1.300" fill="#fff" />
        </Svg>
        <Svg w={16} h={14} box="0 0 16 14" className="ml-[7px]">
          <path d="M.5 4.500H3L6.500 1.500v11L3 9.500H.5zM9 4.500c1.500 1.500 1.500 3.500 0 5M11 2.500c2.500 2.500 2.500 6.500 0 9M13 .5c3.500 3.500 3.500 9.500 0 13" fill="none" stroke="#fff" />
        </Svg>
        <span className="ml-[11px] text-[11px]">ENG</span>
        <time className="ml-3 text-center text-[11px] leading-[18px]">
          10:58
          <br />
          07/04/2018
        </time>
        <button type="button" aria-label="Notifications" className="mr-[19px] ml-[18px]">
          <Svg size={17} box="0 0 17 17">
            <path d="M.5 1.500h16v12h-5.500v3l-3-3H.5z" fill="none" stroke="#fff" />
          </Svg>
        </button>
        <span className="mr-1 h-10 w-px bg-[#7b6a94]" />
      </div>
    </footer>
  );
}

/* ---------- page ---------- */

export default function App() {
  return (
    <main className="relative flex h-screen w-full flex-col overflow-hidden font-[Lato,'Noto_Sans','DejaVu_Sans',sans-serif] text-[12px] leading-[16px] text-black">
      <Wallpaper />
      <div className="absolute top-0 left-0 flex flex-col">
        <Shortcut icon={<UserFolder />} lines={["IM999Max..."]} />
        <Shortcut icon={<NetworkIcon />} lines={["Network"]} />
        <Shortcut icon={<PcIcon />} lines={["This PC"]} />
        <Shortcut icon={<ControlIcon />} lines={["Control", "Panel"]} />
        <Shortcut icon={<RecycleIcon />} lines={["Recycle Bin"]} />
        <Shortcut icon={<Shield />} lines={["Hotspot", "Shield"]} badge />
        <Shortcut icon={<Speedtest />} lines={["Speedtest"]} badge />
      </div>
      <div className="absolute top-0 left-[75px] flex gap-px">
        <Shortcut icon={<Chrome />} badge />
        <Shortcut icon={<AndroidStudio />} badge />
        <Shortcut icon={<VsCode />} badge />
        <Shortcut icon={<Steam />} badge />
        <Shortcut icon={<BlueStacks />} badge />
        <Shortcut icon={<DocFolder kind="pic" />} />
        <Shortcut icon={<DocFolder kind="text" />} />
      </div>
      <div className="absolute top-0 left-[647px]">
        <Shortcut icon={<NavyTip />} />
      </div>
      <span className="absolute top-[469px] left-[77px] text-white [text-shadow:1px_1px_2px_#000]">H</span>
      <div className="absolute top-0 right-[17px] flex items-start gap-[2px]">
        <Shortcut icon={<DocFolder kind="gear" />} lines={["Run in", "window of"]} />
        <div className="flex flex-col">
          <Shortcut icon={<ControlIcon />} />
          <Shortcut icon={<TextFile />} lines={["چند ساعته", "برنامه نو..."]} />
          <Shortcut icon={<TextFile />} lines={["چند ساعته", "یادگیری..."]} />
          <Shortcut icon={<TextFile />} lines={["چند ساعته", "بار.txt"]} />
          <Shortcut icon={<TextFile />} lines={["کارهای", "مو.txt"]} />
        </div>
      </div>

      <section className="absolute top-[79px] left-[1196px] h-[633px] w-[108px] bg-black shadow-[0_2px_12px_rgba(0,0,0,0.5)] outline outline-[#333]">
        <header className="flex pt-[3px]">
          <Caption noMin color="#707070" />
        </header>
      </section>
      <SharingCenter />
      <NetworkConnections />
      <WifiProperties />
      <Ipv4Properties />
      <AdvancedSettings />
      <Taskbar />
    </main>
  );
}
